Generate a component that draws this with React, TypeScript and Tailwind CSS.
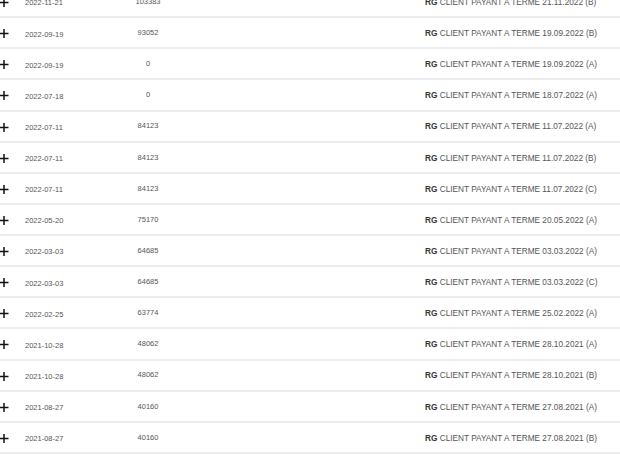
import React from 'react';

interface Entry {
    date: string;
    amount: string;
    label: string;
}

const ROWS: Entry[] = [
    { date: '2022-11-21', amount: '103383', label: 'CLIENT PAYANT A TERME 21.11.2022 (B)' },
    { date: '2022-09-19', amount: '93052', label: 'CLIENT PAYANT A TERME 19.09.2022 (B)' },
    { date: '2022-09-19', amount: '0', label: 'CLIENT PAYANT A TERME 19.09.2022 (A)' },
    { date: '2022-07-18', amount: '0', label: 'CLIENT PAYANT A TERME 18.07.2022 (A)' },
    { date: '2022-07-11', amount: '84123', label: 'CLIENT PAYANT A TERME 11.07.2022 (A)' },
    { date: '2022-07-11', amount: '84123', label: 'CLIENT PAYANT A TERME 11.07.2022 (B)' },
    { date: '2022-07-11', amount: '84123', label: 'CLIENT PAYANT A TERME 11.07.2022 (C)' },
    { date: '2022-05-20', amount: '75170', label: 'CLIENT PAYANT A TERME 20.05.2022 (A)' },
    { date: '2022-03-03', amount: '64685', label: 'CLIENT PAYANT A TERME 03.03.2022 (A)' },
    { date: '2022-03-03', amount: '64685', label: 'CLIENT PAYANT A TERME 03.03.2022 (C)' },
    { date: '2022-02-25', amount: '63774', label: 'CLIENT PAYANT A TERME 25.02.2022 (A)' },
    { date: '2021-10-28', amount: '48062', label: 'CLIENT PAYANT A TERME 28.10.2021 (A)' },
    { date: '2021-10-28', amount: '48062', label: 'CLIENT PAYANT A TERME 28.10.2021 (B)' },
    { date: '2021-08-27', amount: '40160', label: 'CLIENT PAYANT A TERME 27.08.2021 (A)' },
    { date: '2021-08-27', amount: '40160', label: 'CLIENT PAYANT A TERME 27.08.2021 (B)' },
];

function PlusIcon() {
    return (
        <svg width="10" height="10" viewBox="0 0 10 10" className="block">
            <path d="M4 0v9M-0.5 4.5h9" stroke="#111" strokeWidth="1.5" fill="none" />
        </svg>
    );
}

function App() {
    return (
        <div
            className="w-[620px] h-[460px] overflow-hidden bg-white"
            style={{ fontFamily: '"Liberation Sans", Arial, sans-serif' }}
        >
            {/* liste défilée : la première ligne est coupée en haut */}
            <div className="-mt-[13px]">
                {ROWS.map((row, i) => (
                    <div
                        key={i}
                        className="flex items-center h-[31.14px] pt-[3px] border-b-2 border-[#ececec] text-[7.5px] text-[#555]"
                    >
                        <div className="w-[25px] flex items-center">
                            <PlusIcon />
                        </div>
                        <div className="w-[65px]">{row.date}</div>
                        <div className="w-[116px] text-center -mt-[3px]">{row.amount}</div>
                        <div className="w-[101px]" />
                        <div className="w-[118px]" />
                        <div className="flex-1 whitespace-nowrap text-[8.25px]">
                            <span className="font-bold text-[#333]">RG</span> {row.label}
                        </div>
                    </div>
                ))}
            </div>
        </div>
    );
}

export default App;
